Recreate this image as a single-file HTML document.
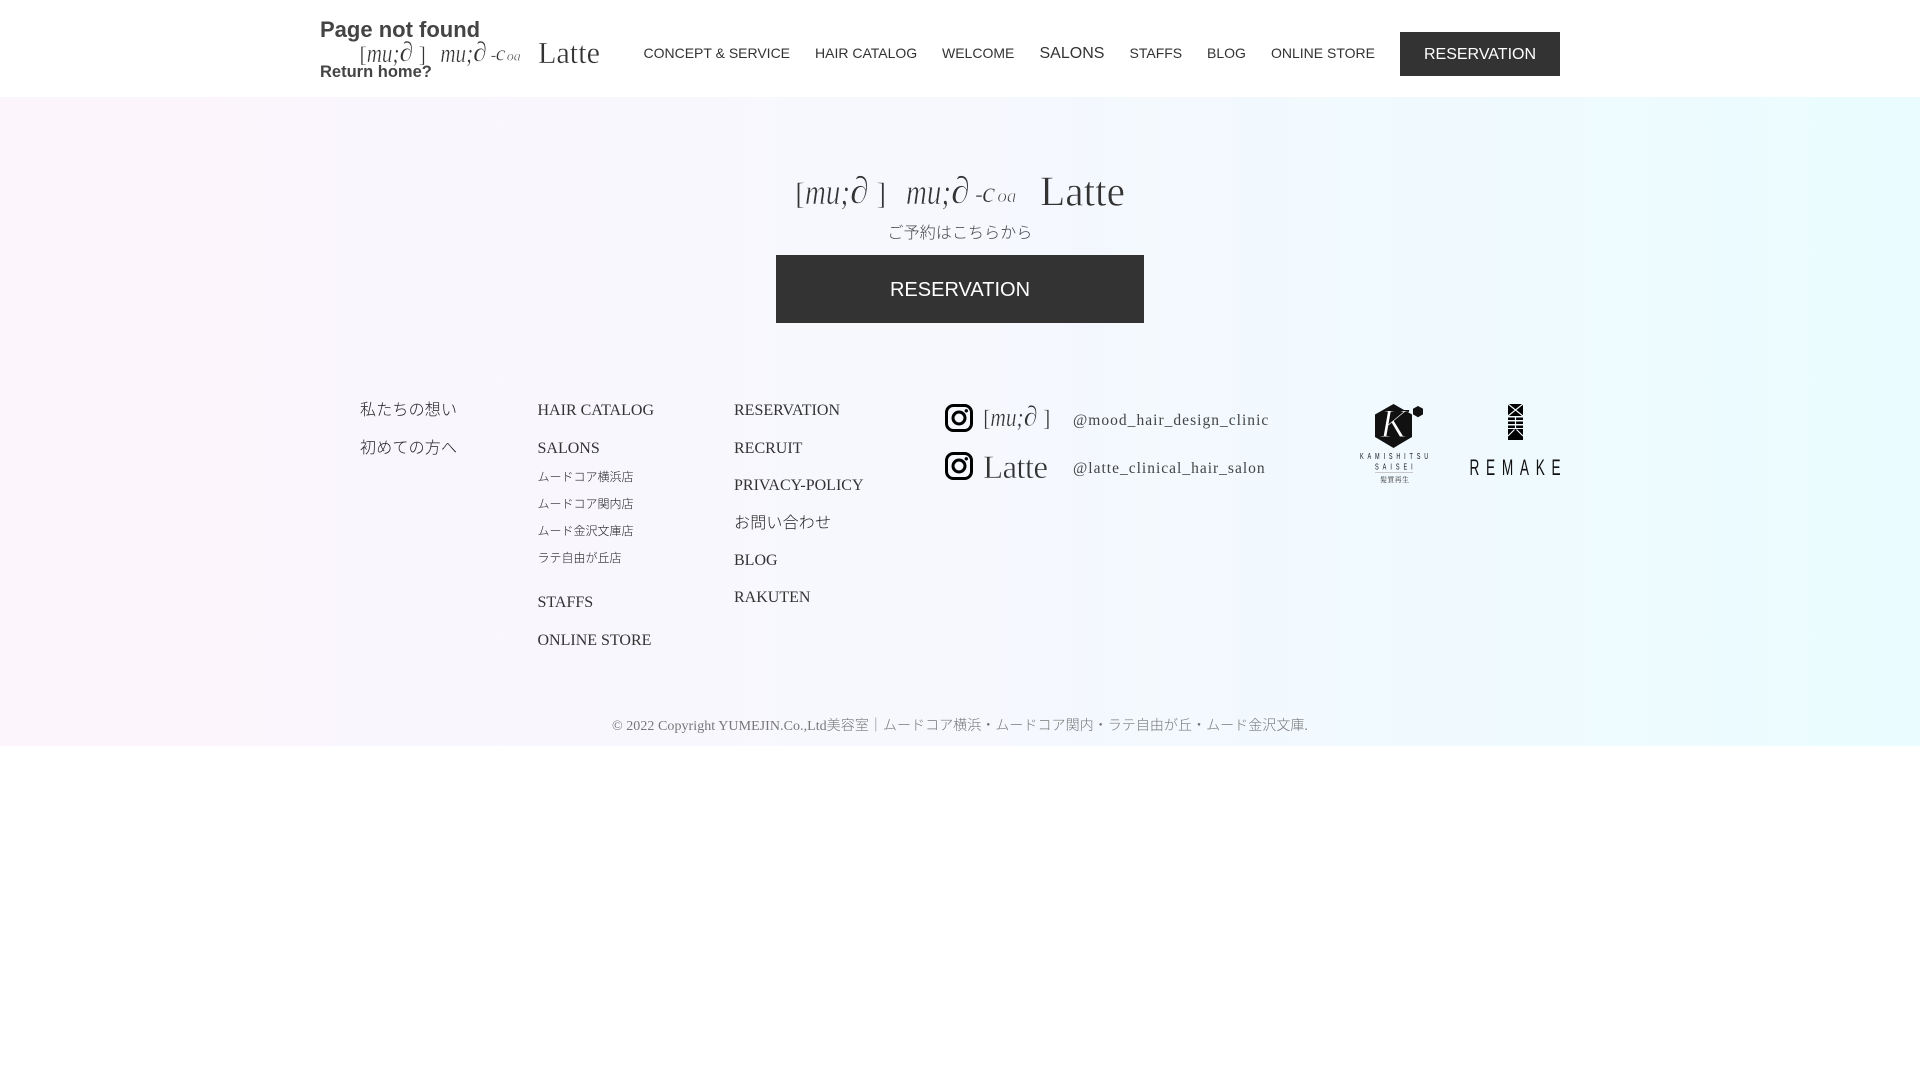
<!DOCTYPE html>
<html lang="ja"><head><meta charset="utf-8"><title>Page not found</title>
<style>
html,body{margin:0;padding:0;background:#fff}
body{position:relative;width:1920px;height:1080px;overflow:hidden;font-family:"Liberation Sans","Noto Sans CJK JP",sans-serif;color:#333}
.a{position:absolute;white-space:nowrap;height:20px;line-height:20px}
#bg{position:absolute;left:0;top:97px;width:1920px;height:649px;background:linear-gradient(90deg,#fdf5fc 0%,#f6f8fe 50%,#eafcff 100%)}
.n{font-size:14px;top:43px;color:#333}
.btn{position:absolute;background:#333;color:#fff;text-align:center}
.f{font-family:"Liberation Serif","Noto Sans CJK JP",serif;font-size:16px;color:#333}
.s{font-family:"Liberation Serif","Noto Sans CJK JP",serif;font-size:12px;color:#222;font-weight:300}
.j{color:#222;font-weight:300}
svg{position:absolute;left:0;top:0}
svg text{font-family:"Liberation Serif",serif;fill:#333}
</style></head><body>
<div id="bg"></div>

<div class="a" style="left:320px;top:20px;font-size:22px;font-weight:bold;color:#444">Page not found</div>
<div class="a" style="left:320px;top:62px;font-size:16.5px;font-weight:bold;color:#444">Return home?</div>

<div class="a n" style="left:643.5px">CONCEPT &amp; SERVICE</div>
<div class="a n" style="left:815px">HAIR CATALOG</div>
<div class="a n" style="left:942px">WELCOME</div>
<div class="a n" style="left:1039.5px;font-size:16px;top:44px">SALONS</div>
<div class="a n" style="left:1129.5px">STAFFS</div>
<div class="a n" style="left:1207px">BLOG</div>
<div class="a n" style="left:1271px">ONLINE STORE</div>
<div class="btn" style="left:1400px;top:32px;width:160px;height:44px;line-height:46px;font-size:16px">RESERVATION</div>

<div class="a" style="left:776px;width:368px;text-align:center;top:224px;font-size:16px;color:#444;font-weight:300;letter-spacing:.1px">ご予約はこちらから</div>
<div class="btn" style="left:776px;top:255px;width:368px;height:68px;line-height:70px;font-size:20px">RESERVATION</div>

<div class="a f j" style="left:360px;top:401px;letter-spacing:.2px">私たちの想い</div>
<div class="a f j" style="left:360px;top:439px;letter-spacing:.2px">初めての方へ</div>

<div class="a f" style="left:537.5px;top:401px">HAIR CATALOG</div>
<div class="a f" style="left:537.5px;top:439px">SALONS</div>
<div class="a s" style="left:537.5px;top:467px">ムードコア横浜店</div>
<div class="a s" style="left:537.5px;top:494px">ムードコア関内店</div>
<div class="a s" style="left:537.5px;top:521px">ムード金沢文庫店</div>
<div class="a s" style="left:537.5px;top:548px">ラテ自由が丘店</div>
<div class="a f" style="left:537.5px;top:593px">STAFFS</div>
<div class="a f" style="left:537.5px;top:631px">ONLINE STORE</div>

<div class="a f" style="left:734px;top:401px">RESERVATION</div>
<div class="a f" style="left:734px;top:439px">RECRUIT</div>
<div class="a f" style="left:734px;top:476px">PRIVACY-POLICY</div>
<div class="a f j" style="left:734px;top:514px;letter-spacing:.2px">お問い合わせ</div>
<div class="a f" style="left:734px;top:551px">BLOG</div>
<div class="a f" style="left:734px;top:588px">RAKUTEN</div>

<div class="a f" style="left:1073px;top:411px;letter-spacing:1.02px;color:#444;font-size:15.5px">@mood_hair_design_clinic</div>
<div class="a f" style="left:1073px;top:459px;letter-spacing:1px;color:#444;font-size:15.5px">@latte_clinical_hair_salon</div>

<div class="a" style="left:0;width:1920px;text-align:center;top:717px;font-family:'Liberation Serif','Noto Sans CJK JP',serif;font-size:14px;font-weight:300;letter-spacing:.05px;color:#777">© 2022 Copyright YUMEJIN.Co.,Ltd美容室｜ムードコア横浜・ムードコア関内・ラテ自由が丘・ムード金沢文庫.</div>

<svg width="1920" height="1080" viewBox="0 0 1920 1080" xmlns="http://www.w3.org/2000/svg">
  <!-- big logo -->
  <g stroke="#f6f8fe" stroke-width=".6">
    <text x="795" y="204" font-size="31">[</text>
    <text x="805" y="204" font-size="36" font-style="italic" textLength="45" lengthAdjust="spacingAndGlyphs">mu;</text>
    <text x="850" y="203" font-size="38" font-style="italic">∂</text>
    <text x="876" y="204" font-size="31">]</text>
    <text x="906" y="204" font-size="36" font-style="italic" textLength="45" lengthAdjust="spacingAndGlyphs">mu;</text>
    <text x="951" y="203" font-size="38" font-style="italic">∂</text>
    <text x="975" y="202" font-size="24" font-style="italic">-<tspan font-size="30" dx="-1">c</tspan><tspan font-size="19" dx="2">oa</tspan></text>
    <text x="1040" y="205.5" font-size="42" textLength="85" lengthAdjust="spacingAndGlyphs">Latte</text>
  </g>
  <!-- header logo -->
  <g transform="translate(359.4,62.6) scale(.729) translate(-795,-205)" stroke="#fff" stroke-width=".5">
    <text x="795" y="204" font-size="31">[</text>
    <text x="805" y="204" font-size="36" font-style="italic" textLength="45" lengthAdjust="spacingAndGlyphs">mu;</text>
    <text x="850" y="203" font-size="38" font-style="italic">∂</text>
    <text x="876" y="204" font-size="31">]</text>
    <text x="906" y="204" font-size="36" font-style="italic" textLength="45" lengthAdjust="spacingAndGlyphs">mu;</text>
    <text x="951" y="203" font-size="38" font-style="italic">∂</text>
    <text x="975" y="202" font-size="24" font-style="italic">-<tspan font-size="30" dx="-1">c</tspan><tspan font-size="19" dx="2">oa</tspan></text>
    <text x="1040" y="205.5" font-size="42" textLength="85" lengthAdjust="spacingAndGlyphs">Latte</text>
  </g>
  <!-- instagram logos -->
  <g transform="translate(983,426) scale(.74) translate(-795,-204)" stroke="#f5f9fe" stroke-width=".5">
    <text x="795" y="204" font-size="31">[</text>
    <text x="805" y="204" font-size="36" font-style="italic" textLength="45" lengthAdjust="spacingAndGlyphs">mu;</text>
    <text x="850" y="203" font-size="38" font-style="italic">∂</text>
    <text x="876" y="204" font-size="31">]</text>
  </g>
  <text x="983" y="478" font-size="33" textLength="65" lengthAdjust="spacing" stroke="#f5f9fe" stroke-width=".5" style="fill:#333">Latte</text>

  <g fill="none" stroke="#000" stroke-width="3">
    <rect x="946.5" y="405.5" width="25" height="25" rx="7"/>
    <circle cx="959" cy="418" r="6"/>
    <rect x="946.5" y="453.5" width="25" height="25" rx="7"/>
    <circle cx="959" cy="466" r="6"/>
  </g>
  <circle cx="966.3" cy="410.8" r="1.7" fill="#000"/>
  <circle cx="966.3" cy="458.8" r="1.7" fill="#000"/>

  <!-- Kamishitsu saisei -->
  <polygon points="1393.5,404 1412,414.5 1412,437 1393.5,448 1375,437 1375,414.5" fill="#111"/>
  <polygon points="1418,406 1423,408.8 1423,414.4 1418,417.2 1413,414.4 1413,408.8" fill="#111"/>
  <text x="1393.5" y="437" font-size="40" font-style="italic" text-anchor="middle" stroke="#111" stroke-width="1.1" style="fill:#fff">K</text>
  <g transform="translate(1360,459) scale(.65,1)"><text x="0" y="0" font-size="8.5" textLength="105" lengthAdjust="spacing" style="font-family:'Liberation Sans',sans-serif;fill:#111">KAMISHITSU</text></g>
  <g transform="translate(1375,469.5) scale(.65,1)"><text x="0" y="0" font-size="8.5" textLength="58" lengthAdjust="spacing" style="font-family:'Liberation Sans',sans-serif;fill:#111">SAISEI</text></g>
  <rect x="1375" y="472" width="38" height="1" fill="#c8c8c8"/>
  <text x="1380" y="482" font-size="7" textLength="29" lengthAdjust="spacing" style="font-family:'Noto Serif CJK SC',serif;fill:#333">髪質再生</text>

  <!-- Remake -->
  <g fill="#000">
    <rect x="1508" y="404" width="15" height="12"/>
    <rect x="1508" y="417.5" width="15" height="2.5"/>
    <rect x="1508" y="421.5" width="15" height="2.5"/>
    <rect x="1508" y="425.5" width="15" height="2.5"/>
    <rect x="1508" y="429" width="15" height="11"/>
  </g>
  <g stroke="#f0fbfe" stroke-width="1.2" fill="none">
    <path d="M1508,404 L1515.5,410 L1523,404 M1508,416 L1515.5,410 L1523,416"/>
    <path d="M1515.5,416 V429"/>
    <path d="M1508,436 L1514.5,429.5 M1523,436 L1516.5,429.5"/>
  </g>
  <g transform="translate(1469.5,475) scale(.62,1)">
    <text x="0" y="0" font-size="22" textLength="147" lengthAdjust="spacing" style="font-family:'Liberation Sans',sans-serif;fill:#111">REMAKE</text>
  </g>
</svg>
</body></html>
